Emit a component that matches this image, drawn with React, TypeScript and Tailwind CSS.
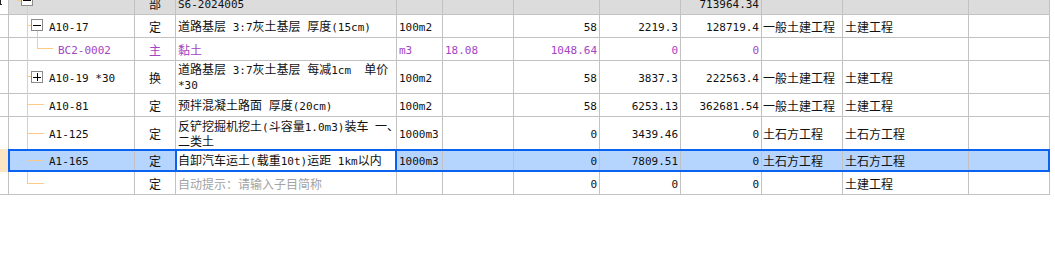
import React from 'react';

// column widths incl. right grid line
const W = [
    'w-[9px]', 'w-[126px]', 'w-[41px]', 'w-[221px]', 'w-[46px]', 'w-[71px]',
    'w-[86px]', 'w-[81px]', 'w-[81px]', 'w-[81px]', 'w-[126px]', 'w-[81px]',
];

const AL = [
    '', '', 'justify-center', 'justify-start pl-[2px]', 'justify-start pl-[2px]', 'justify-start pl-[2px]',
    'justify-end pr-[2px]', 'justify-end pr-[2px]', 'justify-end pr-[2px]', 'justify-start pl-[1px]',
    'justify-start pl-[2px]', 'justify-start',
];

const GRID = 'border-[#c2c2c2]';
const ORANGE = 'bg-[#fcc987]';
const PURPLE = 'text-[#a443c4]';

// ascii runs get the half-width mono face, the rest falls to the CJK face
function T({ s }: { s: string }) {
    const parts = s.split(/([\x20-\x7e]+)/);
    return (
        <span className="block whitespace-pre">
            {parts.map((p, i) =>
                /^[\x20-\x7e]+$/.test(p)
                    ? <span key={i} className="font-['DejaVu_Sans_Mono',monospace] text-[11px]">{p}</span>
                    : p
            )}
        </span>
    );
}

const V = ({ cls }: { cls: string }) => <div className={`absolute w-px ${ORANGE} ${cls}`} />;
const H = ({ cls }: { cls: string }) => <div className={`absolute h-px ${ORANGE} ${cls}`} />;

function Box({ plus, cls }: { plus?: boolean; cls: string }) {
    return (
        <div className={`absolute size-[12px] border border-[#8a8a8a] bg-white flex items-center justify-center ${cls}`}>
            <div className="w-[8px] h-px bg-black" />
            {plus && <div className="absolute h-[8px] w-px bg-black" />}
        </div>
    );
}

type RowData = {
    h: string;
    tree: React.ReactNode;
    pad: string;
    cells: string[]; // col1..col11
    tone?: string;
    hint?: boolean;
    head?: boolean;
};

const rows: RowData[] = [
    {
        h: 'h-[23px]', head: true, pad: 'pl-[40px]',
        tree: (
            <>
                <V cls="left-[8px] top-0 h-[9px]" />
                <H cls="left-[8px] top-[8px] w-[4px]" />
                <Box cls="left-[12px] top-[2px]" />
                <V cls="left-[18px] top-[14px] bottom-[-1px]" />
            </>
        ),
        cells: ['', '部', 'S6-2024005', '', '', '', '', '713964.34', '', '', ''],
    },
    {
        h: 'h-[23px]', pad: 'pl-[40px]',
        tree: (
            <>
                <V cls="left-[18px] top-0 bottom-[-1px]" />
                <H cls="left-[18px] top-[10px] w-[4px]" />
                <Box cls="left-[22px] top-[4px]" />
                <V cls="left-[28px] top-[16px] bottom-[-1px]" />
            </>
        ),
        cells: ['A10-17', '定', '道路基层 3:7灰土基层 厚度(15cm)', '100m2', '', '58', '2219.3', '128719.4', '一般土建工程', '土建工程', ''],
    },
    {
        h: 'h-[23px]', pad: 'pl-[49px]', tone: PURPLE,
        tree: (
            <>
                <V cls="left-[18px] top-0 bottom-[-1px]" />
                <V cls="left-[28px] top-0 h-[11px]" />
                <H cls="left-[28px] top-[10px] w-[16px]" />
            </>
        ),
        cells: ['BC2-0002', '主', '黏土', 'm3', '18.08', '1048.64', '0', '0', '', '', ''],
    },
    {
        h: 'h-[33px]', pad: 'pl-[40px]',
        tree: (
            <>
                <V cls="left-[18px] top-0 bottom-[-1px]" />
                <H cls="left-[18px] top-[15px] w-[4px]" />
                <Box plus cls="left-[22px] top-[10px]" />
            </>
        ),
        cells: ['A10-19 *30', '换', '道路基层 3:7灰土基层 每减1cm  单价\n*30', '100m2', '', '58', '3837.3', '222563.4', '一般土建工程', '土建工程', ''],
    },
    {
        h: 'h-[23px]', pad: 'pl-[40px]',
        tree: (
            <>
                <V cls="left-[18px] top-0 bottom-[-1px]" />
                <H cls="left-[18px] top-[10px] w-[17px]" />
            </>
        ),
        cells: ['A10-81', '定', '预拌混凝土路面 厚度(20cm)', '100m2', '', '58', '6253.13', '362681.54', '一般土建工程', '土建工程', ''],
    },
    {
        h: 'h-[33px]', pad: 'pl-[40px]',
        tree: (
            <>
                <V cls="left-[18px] top-0 bottom-[-1px]" />
                <H cls="left-[18px] top-[16px] w-[17px]" />
            </>
        ),
        cells: ['A1-125', '定', '反铲挖掘机挖土(斗容量1.0m3)装车 一、\n二类土', '1000m3', '', '0', '3439.46', '0', '土石方工程', '土石方工程', ''],
    },
];

const lastRow: RowData = {
    h: 'h-[23px]', pad: 'pl-[40px]', hint: true,
    tree: (
        <>
            <V cls="left-[18px] top-0 h-[12px]" />
            <H cls="left-[18px] top-[11px] w-[17px]" />
        </>
    ),
    cells: ['', '定', '自动提示：请输入子目简称', '', '', '0', '0', '0', '', '土建工程', ''],
};

function Row({ r }: { r: RowData }) {
    const color = r.tone ?? 'text-[#111]';
    return (
        <div className={`flex ${r.h} ${r.head ? 'bg-[#dcdcdc]' : 'bg-white'}`}>
            <div className={`${W[0]} shrink-0 relative bg-white border-r border-b ${GRID}`}>
                {r.head && (
                    <>
                        <div className="absolute left-0 top-[8px] h-[5px] w-px bg-[#222]" />
                        <div className="absolute left-0 top-[12px] h-px w-[2px] bg-[#222]" />
                    </>
                )}
            </div>
            <div className={`${W[1]} shrink-0 relative flex items-center border-r border-b ${GRID} ${r.pad} ${color}`}>
                {r.tree}
                <span className="relative"><T s={r.cells[0]} /></span>
            </div>
            {r.cells.slice(1).map((c, i) => (
                <div
                    key={i}
                    className={`${W[i + 2]} shrink-0 flex items-center overflow-hidden leading-[13px] border-r border-b ${GRID} ${AL[i + 2]} ${i === 1 && r.hint ? 'text-[#a3a3a3]' : color}`}
                >
                    <T s={c} />
                </div>
            ))}
        </div>
    );
}

function SelectedRow() {
    const cell = `shrink-0 flex items-center border-r ${GRID}`;
    return (
        <div className="flex h-[23px] -mt-px relative">
            <div className="w-[8px] shrink-0 bg-[#fde4c4]" />
            <div className="flex flex-1 border-2 border-[#0a62f0] bg-[#b5d5ff] text-[#111]">
                <div className={`w-[125px] ${cell} relative pl-[39px]`}>
                    <V cls="left-[17px] top-0 bottom-0" />
                    <H cls="left-[17px] top-[9px] w-[17px]" />
                    <span className="relative"><T s="A1-165" /></span>
                </div>
                <div className="w-[40px] shrink-0 flex items-center justify-center">定</div>
                <div className="w-[222px] shrink-0 flex items-center bg-white border-x-2 border-[#0a62f0] pl-[1px]">
                    <T s="自卸汽车运土(载重10t)运距 1km以内" />
                </div>
                <div className={`${W[4]} ${cell} ${AL[4]}`}><T s="1000m3" /></div>
                <div className={`${W[5]} ${cell}`} />
                <div className={`${W[6]} ${cell} ${AL[6]}`}><T s="0" /></div>
                <div className={`${W[7]} ${cell} ${AL[7]}`}><T s="7809.51" /></div>
                <div className={`${W[8]} ${cell} ${AL[8]}`}><T s="0" /></div>
                <div className={`${W[9]} ${cell} ${AL[9]}`}>土石方工程</div>
                <div className={`${W[10]} ${cell} ${AL[10]}`}>土石方工程</div>
                <div className="w-[79px] shrink-0" />
            </div>
            <div className="flex-1" />
        </div>
    );
}

export default function App() {
    return (
        <div className="w-[1055px] h-[257px] overflow-hidden bg-white font-['Noto_Sans_CJK_SC',sans-serif] text-[12px] leading-[13px] select-none">
            <div className="-mt-[8px] w-[1050px]">
                {rows.map((r, i) => <Row key={i} r={r} />)}
                <SelectedRow />
                <Row r={lastRow} />
            </div>
        </div>
    );
}
